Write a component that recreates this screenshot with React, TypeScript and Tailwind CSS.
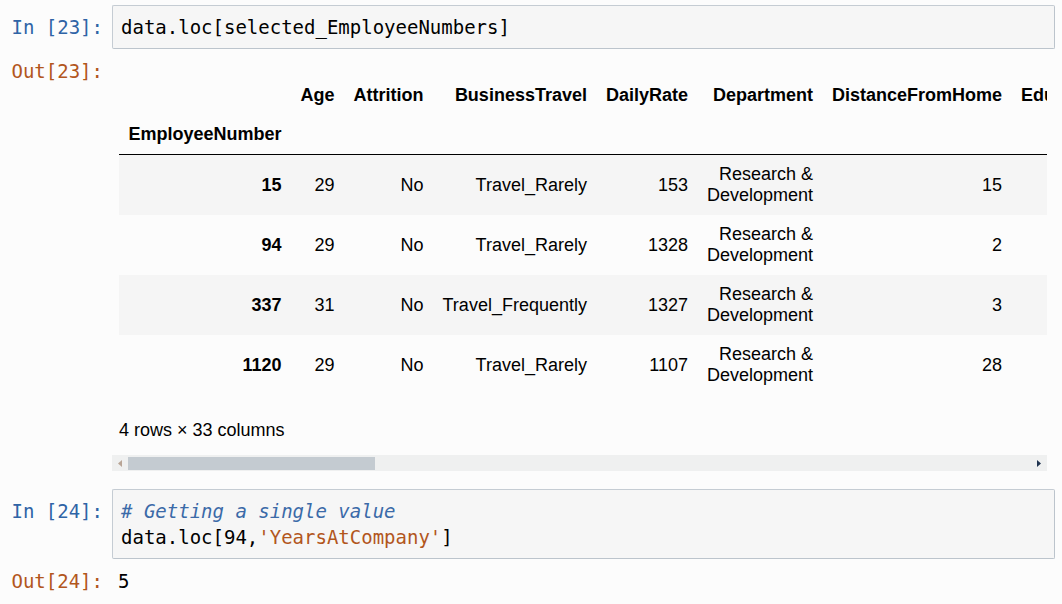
import React from "react";

const mono = { fontFamily: '"DejaVu Sans Mono", "Liberation Mono", monospace' };

type Row = {
  idx: string;
  age: string;
  attr: string;
  travel: string;
  rate: string;
  dist: string;
  edu: string;
};

const rows: Row[] = [
  { idx: "15", age: "29", attr: "No", travel: "Travel_Rarely", rate: "153", dist: "15", edu: "2" },
  { idx: "94", age: "29", attr: "No", travel: "Travel_Rarely", rate: "1328", dist: "2", edu: "4" },
  { idx: "337", age: "31", attr: "No", travel: "Travel_Frequently", rate: "1327", dist: "3", edu: "4" },
  { idx: "1120", age: "29", attr: "No", travel: "Travel_Rarely", rate: "1107", dist: "28", edu: "3" },
];

const th = "px-[9.5px] py-[9px] text-right font-bold whitespace-nowrap align-middle";
const td = "px-[9.5px] py-[9px] text-right whitespace-nowrap align-middle";

export default function App() {
  return (
    <div className="min-h-[604px] w-[1062px] bg-[#fcfcfc] pt-[5px] text-black overflow-hidden">
      {/* In [23] */}
      <div className="flex">
        <div
          className="w-[112px] shrink-0 pr-[9px] pt-[9px] text-right text-[19px] leading-[26px] text-[#2f64a6]"
          style={mono}
        >
          In&nbsp;[23]:
        </div>
        <div
          className="mr-[7px] flex-1 rounded-[2px] border border-[#c5ccd3] border-b-[#bcc4cc] border-r-[#bcc4cc] bg-[#f6f6f6] px-[8px] py-[8px] text-[19px] leading-[26px]"
          style={mono}
        >
          data.loc[selected_EmployeeNumbers]
        </div>
      </div>

      {/* Out [23] */}
      <div className="mt-[9px] flex">
        <div
          className="w-[112px] shrink-0 pr-[9px] text-right text-[19px] leading-[26px] text-[#b2561d]"
          style={mono}
        >
          Out[23]:
        </div>
        <div
          className="mr-[15px] min-w-0 flex-1 overflow-hidden"
          style={{ fontFamily: '"Liberation Sans", Arial, sans-serif' }}
        >
          <div className="mt-[18px] pl-[7px] text-[18px] leading-[21px]">
            <table className="border-collapse">
              <thead>
                <tr>
                  <th className={th}></th>
                  <th className={th}>Age</th>
                  <th className={th}>Attrition</th>
                  <th className={th}>BusinessTravel</th>
                  <th className={th}>DailyRate</th>
                  <th className={th}>Department</th>
                  <th className={th}>DistanceFromHome</th>
                  <th className={th}>Education</th>
                </tr>
                <tr>
                  <th className={th + " border-b border-black"}>EmployeeNumber</th>
                  <th className={th + " border-b border-black"}></th>
                  <th className={th + " border-b border-black"}></th>
                  <th className={th + " border-b border-black"}></th>
                  <th className={th + " border-b border-black"}></th>
                  <th className={th + " border-b border-black"}></th>
                  <th className={th + " border-b border-black"}></th>
                  <th className={th + " border-b border-black"}></th>
                </tr>
              </thead>
              <tbody>
                {rows.map((r, i) => (
                  <tr key={r.idx} className={i % 2 === 0 ? "bg-[#f5f5f5]" : ""}>
                    <th className={th}>{r.idx}</th>
                    <td className={td}>{r.age}</td>
                    <td className={td}>{r.attr}</td>
                    <td className={td}>{r.travel}</td>
                    <td className={td}>{r.rate}</td>
                    <td className={td}>
                      Research &amp;
                      <br />
                      Development
                    </td>
                    <td className={td}>{r.dist}</td>
                    <td className={td}>{r.edu}</td>
                  </tr>
                ))}
              </tbody>
            </table>
            <p className="mt-[25px] text-[18px] leading-[21px]">4 rows × 33 columns</p>
          </div>

          {/* horizontal scrollbar */}
          <div className="mt-[14px] flex h-[16px] items-center bg-[#eff0f0]">
            <div className="flex w-[16px] shrink-0 items-center justify-center">
              <svg width="5" height="7" viewBox="0 0 5 7">
                <path d="M4 0 L0 3.5 L4 7 Z" fill="#b9a596" />
              </svg>
            </div>
            <div className="h-[13px] w-[247px] bg-[#c4cbd1]" />
            <div className="flex-1" />
            <div className="flex w-[16px] shrink-0 items-center justify-center">
              <svg width="5" height="7" viewBox="0 0 5 7">
                <path d="M0 0 L4 3.5 L0 7 Z" fill="#1f3350" />
              </svg>
            </div>
          </div>
        </div>
      </div>

      {/* In [24] */}
      <div className="mt-[18px] flex">
        <div
          className="w-[112px] shrink-0 pr-[9px] pt-[9px] text-right text-[19px] leading-[26px] text-[#2f64a6]"
          style={mono}
        >
          In&nbsp;[24]:
        </div>
        <div
          className="mr-[7px] flex-1 rounded-[2px] border border-[#c5ccd3] border-b-[#bcc4cc] border-r-[#bcc4cc] bg-[#f6f6f6] px-[8px] py-[8px] text-[19px] leading-[26px]"
          style={mono}
        >
          <div className="italic text-[#3b6aa8]"># Getting a single value</div>
          <div>
            data.loc[94,<span className="text-[#b2561d]">'YearsAtCompany'</span>]
          </div>
        </div>
      </div>

      {/* Out [24] */}
      <div className="mt-[9px] flex">
        <div
          className="w-[112px] shrink-0 pr-[9px] text-right text-[19px] leading-[26px] text-[#b2561d]"
          style={mono}
        >
          Out[24]:
        </div>
        <div className="pl-[6px] text-[19px] leading-[26px]" style={mono}>
          5
        </div>
      </div>
    </div>
  );
}
